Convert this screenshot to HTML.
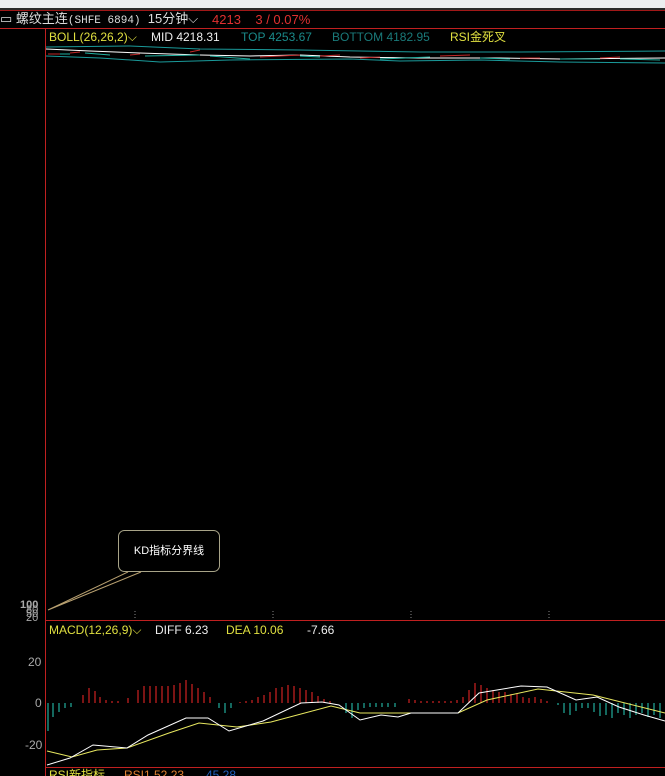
<!DOCTYPE html>
<html><head><meta charset="utf-8"><style>
html,body{margin:0;padding:0;background:#000;width:665px;height:776px;overflow:hidden}
body{position:relative;font-family:"Liberation Sans","Noto Sans CJK SC",sans-serif}
.t{position:absolute;white-space:nowrap;font-size:12px;line-height:14px}
</style></head><body>
<div style="position:absolute;left:0;top:0;width:665px;height:8px;background:#eceef0"></div>
<div style="position:absolute;left:0;top:8px;width:665px;height:2px;background:#2a2a2a"></div>
<div style="position:absolute;left:0;top:10px;width:665px;height:1px;background:#a01818"></div>
<div style="position:absolute;left:0;top:28px;width:665px;height:1px;background:#c02020"></div>
<div style="position:absolute;left:45px;top:28px;width:1px;height:748px;background:#c02020"></div>
<div style="position:absolute;left:45px;top:620px;width:620px;height:1px;background:#c02020"></div>
<div style="position:absolute;left:45px;top:767px;width:620px;height:1px;background:#c02020"></div>

<div class="t" style="left:0;top:12px;color:#ddd;font-size:13px">▭ 螺纹主连<span style="font-family:'Liberation Mono',monospace;font-size:11px">(SHFE 6894)</span>&nbsp;&nbsp;15分钟⌵</div>
<div class="t" style="left:212px;top:13px;color:#e03030;font-size:13px">4213&nbsp;&nbsp;&nbsp; 3 / 0.07%</div>
<div class="t" style="left:49px;top:30px;color:#e0e040">BOLL(26,26,2)⌵</div>
<div class="t" style="left:151px;top:30px;color:#eee">MID 4218.31</div>
<div class="t" style="left:241px;top:30px;color:#1a8a8a">TOP 4253.67</div>
<div class="t" style="left:332px;top:30px;color:#1a7a7a">BOTTOM 4182.95</div>
<div class="t" style="left:450px;top:30px;color:#e0e040">RSI金死叉</div>

<svg style="position:absolute;left:0;top:0" width="665" height="776">
<polyline fill="none" stroke="#1a9a9a" points="46,47 130,46 200,49 300,50 420,52 520,52 665,51"/>
<polyline fill="none" stroke="#1a9a9a" points="46,56 100,58 160,62 230,60 350,59 400,61 480,60 560,62 665,63"/>
<polyline fill="none" stroke="#fff" points="46,49 90,51 140,53 200,55 250,56 300,55 350,57 420,58 500,58 560,59 665,58"/>
<g stroke="#c02828"><line x1="48" y1="54" x2="60" y2="54"/><line x1="70" y1="53" x2="80" y2="52"/><line x1="130" y1="55" x2="140" y2="54"/><line x1="190" y1="52" x2="200" y2="50"/><line x1="260" y1="57" x2="300" y2="55"/><line x1="320" y1="56" x2="340" y2="55"/><line x1="360" y1="58" x2="380" y2="57"/><line x1="440" y1="56" x2="470" y2="55"/><line x1="520" y1="58" x2="540" y2="58"/><line x1="600" y1="58" x2="620" y2="57"/></g>
<g stroke="#20b0a0"><line x1="60" y1="54" x2="70" y2="54"/><line x1="85" y1="53" x2="110" y2="55"/><line x1="145" y1="56" x2="200" y2="55"/><line x1="210" y1="56" x2="250" y2="59"/><line x1="300" y1="56" x2="320" y2="57"/><line x1="380" y1="59" x2="430" y2="57"/><line x1="480" y1="58" x2="510" y2="59"/><line x1="560" y1="59" x2="600" y2="59"/><line x1="620" y1="59" x2="660" y2="60"/></g>
<g stroke="#888" stroke-dasharray="1,2"><line x1="135" y1="611" x2="135" y2="620"/><line x1="273" y1="611" x2="273" y2="620"/><line x1="411" y1="611" x2="411" y2="620"/><line x1="549" y1="611" x2="549" y2="620"/></g>
<rect x="118.5" y="530.5" width="101" height="41" rx="6" fill="#000" stroke="#a8a488"/>
<polyline fill="none" stroke="#b8a070" points="128,572 48,610 141,572"/>
<g stroke-width="1.3">
<line x1="48" y1="703" x2="48" y2="731" stroke="#20a090"/><line x1="53" y1="703" x2="53" y2="717" stroke="#20a090"/><line x1="59" y1="703" x2="59" y2="712" stroke="#20a090"/><line x1="65" y1="703" x2="65" y2="708" stroke="#20a090"/><line x1="71" y1="703" x2="71" y2="707" stroke="#20a090"/>
</g>
<g stroke="#c02020" stroke-width="1.3">
<line x1="83" y1="703" x2="83" y2="695"/><line x1="89" y1="703" x2="89" y2="688"/><line x1="95" y1="703" x2="95" y2="691"/><line x1="100" y1="703" x2="100" y2="697"/><line x1="106" y1="703" x2="106" y2="700"/><line x1="112" y1="703" x2="112" y2="701"/><line x1="118" y1="703" x2="118" y2="701"/><line x1="128" y1="703" x2="128" y2="698"/>
<line x1="138" y1="703" x2="138" y2="690"/><line x1="144" y1="703" x2="144" y2="686"/><line x1="150" y1="703" x2="150" y2="686"/><line x1="156" y1="703" x2="156" y2="686"/><line x1="162" y1="703" x2="162" y2="686"/><line x1="168" y1="703" x2="168" y2="686"/><line x1="174" y1="703" x2="174" y2="685"/><line x1="180" y1="703" x2="180" y2="683"/><line x1="186" y1="703" x2="186" y2="680"/><line x1="192" y1="703" x2="192" y2="684"/><line x1="198" y1="703" x2="198" y2="688"/><line x1="204" y1="703" x2="204" y2="692"/><line x1="210" y1="703" x2="210" y2="697"/>
<line x1="240" y1="703" x2="240" y2="702"/><line x1="246" y1="703" x2="246" y2="701"/><line x1="252" y1="703" x2="252" y2="700"/><line x1="258" y1="703" x2="258" y2="697"/><line x1="264" y1="703" x2="264" y2="695"/><line x1="270" y1="703" x2="270" y2="692"/><line x1="276" y1="703" x2="276" y2="688"/><line x1="282" y1="703" x2="282" y2="687"/><line x1="288" y1="703" x2="288" y2="685"/><line x1="294" y1="703" x2="294" y2="686"/><line x1="300" y1="703" x2="300" y2="688"/><line x1="306" y1="703" x2="306" y2="690"/><line x1="312" y1="703" x2="312" y2="692"/><line x1="318" y1="703" x2="318" y2="696"/><line x1="324" y1="703" x2="324" y2="699"/><line x1="330" y1="703" x2="330" y2="701"/>
<line x1="409" y1="703" x2="409" y2="699"/><line x1="415" y1="703" x2="415" y2="700"/><line x1="421" y1="703" x2="421" y2="701"/><line x1="427" y1="703" x2="427" y2="701"/><line x1="433" y1="703" x2="433" y2="701"/><line x1="439" y1="703" x2="439" y2="701"/><line x1="445" y1="703" x2="445" y2="701"/><line x1="451" y1="703" x2="451" y2="701"/><line x1="457" y1="703" x2="457" y2="700"/><line x1="463" y1="703" x2="463" y2="697"/>
<line x1="469" y1="703" x2="469" y2="690"/><line x1="475" y1="703" x2="475" y2="683"/><line x1="481" y1="703" x2="481" y2="685"/><line x1="487" y1="703" x2="487" y2="688"/><line x1="493" y1="703" x2="493" y2="690"/><line x1="499" y1="703" x2="499" y2="692"/><line x1="505" y1="703" x2="505" y2="692"/><line x1="511" y1="703" x2="511" y2="694"/><line x1="517" y1="703" x2="517" y2="694"/><line x1="523" y1="703" x2="523" y2="697"/><line x1="529" y1="703" x2="529" y2="698"/><line x1="535" y1="703" x2="535" y2="697"/><line x1="541" y1="703" x2="541" y2="699"/><line x1="547" y1="703" x2="547" y2="701"/>
</g>
<g stroke="#20a090" stroke-width="1.3">
<line x1="219" y1="703" x2="219" y2="708"/><line x1="225" y1="703" x2="225" y2="713"/><line x1="231" y1="703" x2="231" y2="708"/>
<line x1="346" y1="703" x2="346" y2="713"/><line x1="352" y1="703" x2="352" y2="718"/><line x1="358" y1="703" x2="358" y2="710"/><line x1="364" y1="703" x2="364" y2="708"/><line x1="370" y1="703" x2="370" y2="707"/><line x1="376" y1="703" x2="376" y2="707"/><line x1="382" y1="703" x2="382" y2="707"/><line x1="388" y1="703" x2="388" y2="707"/><line x1="395" y1="703" x2="395" y2="707"/>
<line x1="558" y1="703" x2="558" y2="705"/><line x1="564" y1="703" x2="564" y2="713"/><line x1="570" y1="703" x2="570" y2="715"/><line x1="576" y1="703" x2="576" y2="711"/><line x1="582" y1="703" x2="582" y2="708"/><line x1="588" y1="703" x2="588" y2="708"/><line x1="594" y1="703" x2="594" y2="712"/><line x1="600" y1="703" x2="600" y2="716"/><line x1="606" y1="703" x2="606" y2="715"/><line x1="612" y1="703" x2="612" y2="718"/><line x1="618" y1="703" x2="618" y2="713"/><line x1="624" y1="703" x2="624" y2="715"/><line x1="630" y1="703" x2="630" y2="718"/><line x1="636" y1="703" x2="636" y2="715"/><line x1="642" y1="703" x2="642" y2="713"/><line x1="648" y1="703" x2="648" y2="717"/><line x1="654" y1="703" x2="654" y2="715"/><line x1="660" y1="703" x2="660" y2="718"/>
</g>
<polyline fill="none" stroke="#e8e860" points="47,751 72,757 97,750 127,748 169,733 199,723 237,727 271,722 331,706 360,713 458,713 487,700 538,689 593,695 665,713"/>
<polyline fill="none" stroke="#fff" points="47,765 70,758 93,745 127,748 148,735 186,718 208,718 229,731 263,721 301,703 322,702 339,705 360,720 381,715 398,717 411,713 458,713 479,693 521,686 547,687 576,700 597,697 619,707 644,715 665,721"/>
</svg>
<div class="t" style="left:118px;top:544px;width:102px;text-align:center;color:#fff;font-size:11px">KD指标分界线</div>
<div class="t" style="left:20px;top:600px;color:#aaa;font-size:11px;line-height:10px;font-weight:bold">100</div>
<div class="t" style="left:26px;top:605px;color:#aaa;font-size:11px;line-height:10px">80</div>
<div class="t" style="left:26px;top:609px;color:#aaa;font-size:11px;line-height:10px">50</div>
<div class="t" style="left:26px;top:613px;color:#aaa;font-size:11px;line-height:10px">20</div>
<div class="t" style="left:49px;top:623px;color:#e0e040">MACD(12,26,9)⌵</div>
<div class="t" style="left:155px;top:623px;color:#eee">DIFF 6.23</div>
<div class="t" style="left:226px;top:623px;color:#e0e040">DEA 10.06</div>
<div class="t" style="left:307px;top:623px;color:#eee">-7.66</div>
<div class="t" style="left:28px;top:655px;color:#aaa">20</div>
<div class="t" style="left:35px;top:696px;color:#aaa">0</div>
<div class="t" style="left:25px;top:738px;color:#aaa">-20</div>
<div class="t" style="left:49px;top:768px;color:#e0e040">RSI新指标</div>
<div class="t" style="left:124px;top:768px;color:#e08030">RSI1 52.23</div>
<div class="t" style="left:206px;top:768px;color:#2060c0">45.28</div>
</body></html>
